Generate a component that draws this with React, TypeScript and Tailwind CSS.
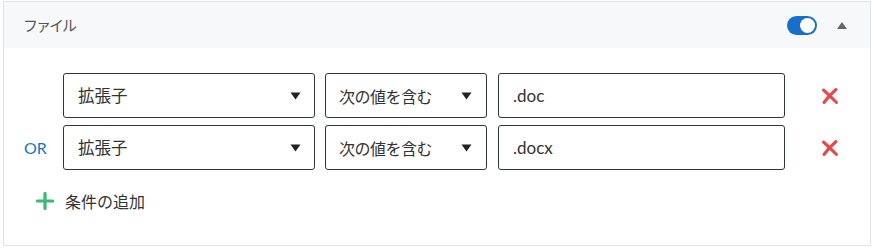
import React from "react";

const Caret = () => (
  <svg width="11" height="8" viewBox="0 0 11 8" className="shrink-0">
    <path d="M0.5 0.5 H10.5 L5.5 7.5 Z" fill="#222" />
  </svg>
);

const XIcon = () => (
  <svg width="18" height="18" viewBox="0 0 18 18">
    <path d="M2.5 3 C6 6, 10 10, 15.5 15.5" stroke="#e5484d" strokeWidth="3" strokeLinecap="round" fill="none" />
    <path d="M15 2.5 C11 6, 7 10, 3 15.5" stroke="#e5484d" strokeWidth="3" strokeLinecap="round" fill="none" />
  </svg>
);

const Row = ({ label, value }: { label: string; value: string }) => (
  <div className="flex items-center h-[45px]">
    <div className="w-[59px] pl-[20px] text-[16px] text-[#1a73c8]" style={{ fontFamily: "Lato, 'Noto Sans CJK JP', sans-serif" }}>
      {label}
    </div>
    <div className="w-[252px] h-full border border-[#2d3540] rounded-[3px] flex items-center justify-between pl-[14px] pr-[13px] bg-white">
      <span className="text-[16.5px] text-[#333]">拡張子</span>
      <Caret />
    </div>
    <div className="ml-[10px] w-[162px] h-full border border-[#2d3540] rounded-[3px] flex items-center justify-between pl-[13px] pr-[14px] bg-white">
      <span className="text-[16px] text-[#333] tracking-[-0.5px]">次の値を含む</span>
      <Caret />
    </div>
    <div className="ml-[11px] w-[287px] h-full border border-[#2d3540] rounded-[3px] flex items-center pl-[14px] bg-white">
      <span className="text-[17px] text-[#333]" style={{ fontFamily: "Lato, sans-serif" }}>{value}</span>
    </div>
    <div className="ml-[36px] flex items-center">
      <XIcon />
    </div>
  </div>
);

export default function App() {
  return (
    <div className="w-[872px] h-[249px] bg-white pt-[1px] pl-[3px]" style={{ fontFamily: "'Noto Sans CJK JP', 'Noto Sans', sans-serif" }}>
      <div className="w-[868px] h-[245px] border border-[#e3e3e3] flex flex-col">
        <div className="h-[46px] bg-[#f7f8fa] flex items-center pl-[19px] pr-[23px]">
          <span className="text-[15px] text-[#555] tracking-[-2px]">ファイル</span>
          <div className="ml-auto flex items-center">
            <div className="w-[30px] h-[19px] rounded-full bg-[#1670c9] flex items-center justify-end pr-[2px]">
              <div className="w-[15px] h-[15px] rounded-full bg-white" />
            </div>
            <svg width="10" height="7" viewBox="0 0 10 7" className="ml-[20px]">
              <path d="M0 7 L5 0 L10 7 Z" fill="#666" />
            </svg>
          </div>
        </div>
        <div className="flex flex-col gap-[7px] pt-[25px]">
          <Row label="" value=".doc" />
          <Row label="OR" value=".docx" />
        </div>
        <div className="flex items-center pl-[32px] mt-[20px] h-[22px]">
          <svg width="18" height="18" viewBox="0 0 18 18">
            <path d="M9 1.5 V16.5 M1.5 9 H16.5" stroke="#3db873" strokeWidth="3.2" strokeLinecap="round" />
          </svg>
          <span className="ml-[11px] text-[16px] text-[#333]">条件の追加</span>
        </div>
      </div>
    </div>
  );
}
